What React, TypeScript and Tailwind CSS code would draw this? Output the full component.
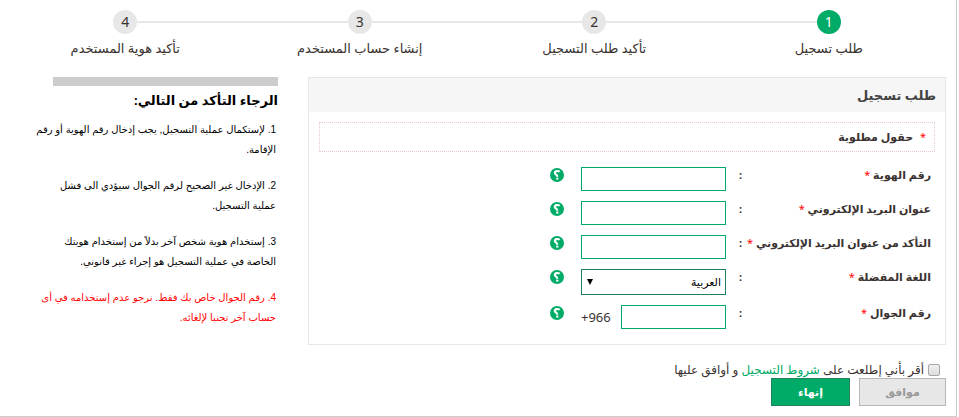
import { useState } from "react";
import type { ReactNode } from "react";

interface Step {
  number: number;
  label: string;
}

const steps: Step[] = [
  { number: 1, label: "طلب تسجيل" },
  { number: 2, label: "تأكيد طلب التسجيل" },
  { number: 3, label: "إنشاء حساب المستخدم" },
  { number: 4, label: "تأكيد هوية المستخدم" },
];

const notes = [
  "1. لإستكمال عملية التسجيل, يجب إدخال رقم الهوية أو رقم\nالإقامة.",
  "2. الإدخال غير الصحيح لرقم الجوال سيؤدي الى فشل\nعملية التسجيل.",
  "3. إستخدام هوية شخص آخر بدلاً من إستخدام هويتك\nالخاصة في عملية التسجيل هو إجراء غير قانوني.",
  "4. رقم الجوال خاص بك فقط. نرجو عدم إستخدامه في أى\nحساب آخر تجنبا لإلغائه.",
];

const inputClass = "h-6 border border-[#00ab67] bg-white px-1 text-xs outline-none";

function HelpButton() {
  return (
    <button type="button" aria-label="مساعدة" className="mt-px h-3.5 w-3.5 shrink-0">
      <svg viewBox="0 0 14 14" className="h-3.5 w-3.5">
        <circle cx="7" cy="7" r="7" fill="#00ab67" />
        <path
          d="M9.6 3.9C8.4 2.6 4.8 2.7 4.8 4.9C4.8 6.6 7.3 6.4 7.3 8.7"
          fill="none"
          stroke="#fff"
          strokeWidth="2.1"
        />
        <rect x="6.2" y="9.6" width="2.2" height="2" fill="#fff" />
      </svg>
    </button>
  );
}

interface FieldProps {
  id: string;
  label: string;
  children: ReactNode;
}

function Field({ id, label, children }: FieldProps) {
  return (
    <div className="flex items-start">
      <label
        htmlFor={id}
        className="flex w-[192px] shrink-0 justify-between text-[11px] leading-4 font-bold whitespace-nowrap text-[#3a3230]"
      >
        <span>
          {label} <span className="font-normal text-[#ff0000]">*</span>
        </span>
        <span>:</span>
      </label>
      <div className="mr-[13px] flex w-[145px] shrink-0 items-center justify-between">{children}</div>
      <div className="mr-[17px] flex">
        <HelpButton />
      </div>
    </div>
  );
}

export default function App() {
  const [agreed, setAgreed] = useState(false);

  return (
    <main
      dir="rtl"
      className="mr-0.5 border-r border-b border-[#cccccc] bg-white pt-2.5 pr-2.5 pb-2.5 pl-2 font-['Noto_Sans','DejaVu_Sans',sans-serif] text-[#3a3230]"
    >
      {/* steps */}
      <ol className="grid grid-cols-4">
        {steps.map((step, i) => (
          <li key={step.number} className="flex flex-col items-center">
            <div className="flex w-full items-center">
              <span className={i === 0 ? "h-0.5 flex-1" : "h-0.5 flex-1 bg-[#e7e7e7]"} />
              <span
                className={
                  i === 0
                    ? "flex h-6 w-6 items-center justify-center rounded-full bg-[#00ab67] text-sm text-white"
                    : "flex h-6 w-6 items-center justify-center rounded-full bg-[#e7e7e7] text-sm"
                }
              >
                {step.number}
              </span>
              <span className={i === steps.length - 1 ? "h-0.5 flex-1" : "h-0.5 flex-1 bg-[#e7e7e7]"} />
            </div>
            <span className="mt-1.5 text-[13px] leading-4">{step.label}</span>
          </li>
        ))}
      </ol>

      <div className="mt-[21px] flex items-start gap-[30px]">
        {/* registration form */}
        <section className="flex-1 border border-[#e7e7e7] pb-[15px]">
          <h1 className="bg-[#f6f6f6] px-[9px] text-[13px] leading-[34px] font-bold text-[#444444]">
            طلب تسجيل
          </h1>
          <p className="mx-2.5 mt-2.5 h-[30px] border border-dotted border-[#e9c6da] px-2 text-[11px] leading-7 font-bold">
            <span className="ml-1 font-normal text-[#ff0000]">*</span> حقول مطلوبة
          </p>
          <div className="mt-[15px] flex flex-col gap-2.5 pr-3.5">
            <Field id="identity" label="رقم الهوية">
              <input id="identity" type="text" className={`${inputClass} w-full`} />
            </Field>
            <Field id="email" label="عنوان البريد الإلكتروني">
              <input id="email" type="email" className={`${inputClass} w-full`} />
            </Field>
            <Field id="email-confirm" label="التأكد من عنوان البريد الإلكتروني">
              <input id="email-confirm" type="email" className={`${inputClass} w-full`} />
            </Field>
            <Field id="language" label="اللغة المفضلة">
              <div className="relative w-full">
                <select
                  id="language"
                  className="block h-[26px] w-full appearance-none border border-[#23805c] bg-white px-1 text-[11px] text-black outline-none"
                >
                  <option>العربية</option>
                  <option>English</option>
                </select>
                <svg
                  viewBox="0 0 6 6"
                  className="pointer-events-none absolute top-2.5 left-1.5 h-1.5 w-1.5"
                >
                  <path d="M0 0H6L3 6Z" fill="#000" />
                </svg>
              </div>
            </Field>
            <Field id="mobile" label="رقم الجوال">
              <input id="mobile" type="tel" className={`${inputClass} w-[105px]`} />
              <span dir="ltr" className="text-[13px] leading-4">
                +966
              </span>
            </Field>
          </div>
        </section>

        {/* notes */}
        <aside className="ml-[45px] w-[225px] shrink-0 border-t-[9px] border-[#cccccc] text-black">
          <h2 className="mt-1 text-[13px] leading-5 font-bold">الرجاء التأكد من التالي:</h2>
          <ol className="mt-2.5 -ml-5 flex flex-col gap-4 pr-0.5 font-['Liberation_Sans','DejaVu_Sans',sans-serif] text-[10px] leading-5 whitespace-pre">
            {notes.map((note, i) => (
              <li key={note} className={i === 3 ? "text-[#ff0000]" : ""}>
                {note}
              </li>
            ))}
          </ol>
        </aside>
      </div>

      {/* agreement */}
      <div className="mt-4 flex items-center pr-1.5 text-xs leading-[17px]">
        <input
          id="agree"
          type="checkbox"
          checked={agreed}
          onChange={(e) => setAgreed(e.target.checked)}
          className="ml-1 h-3 w-3 appearance-none rounded-xs border border-[#a9a9a9] bg-linear-to-b from-[#f0f0f0] to-[#dcdcdc] checked:bg-[#00ab67]"
        />
        <label htmlFor="agree">
          أقر بأني إطلعت على{" "}
          <a href="#terms" className="text-[#00ab67]">
            شروط التسجيل
          </a>{" "}
          و أوافق عليها
        </label>
      </div>
      <div className="flex gap-[9px] text-[11px] font-bold">
        <button
          type="button"
          disabled={!agreed}
          className="h-7 w-[87px] border border-[#b8b8b8] bg-[#e7e7e7] text-[#999999]"
        >
          موافق
        </button>
        <button type="button" className="h-7 w-[79px] border border-[#23805c] bg-[#00ab67] text-white">
          إنهاء
        </button>
      </div>
    </main>
  );
}
